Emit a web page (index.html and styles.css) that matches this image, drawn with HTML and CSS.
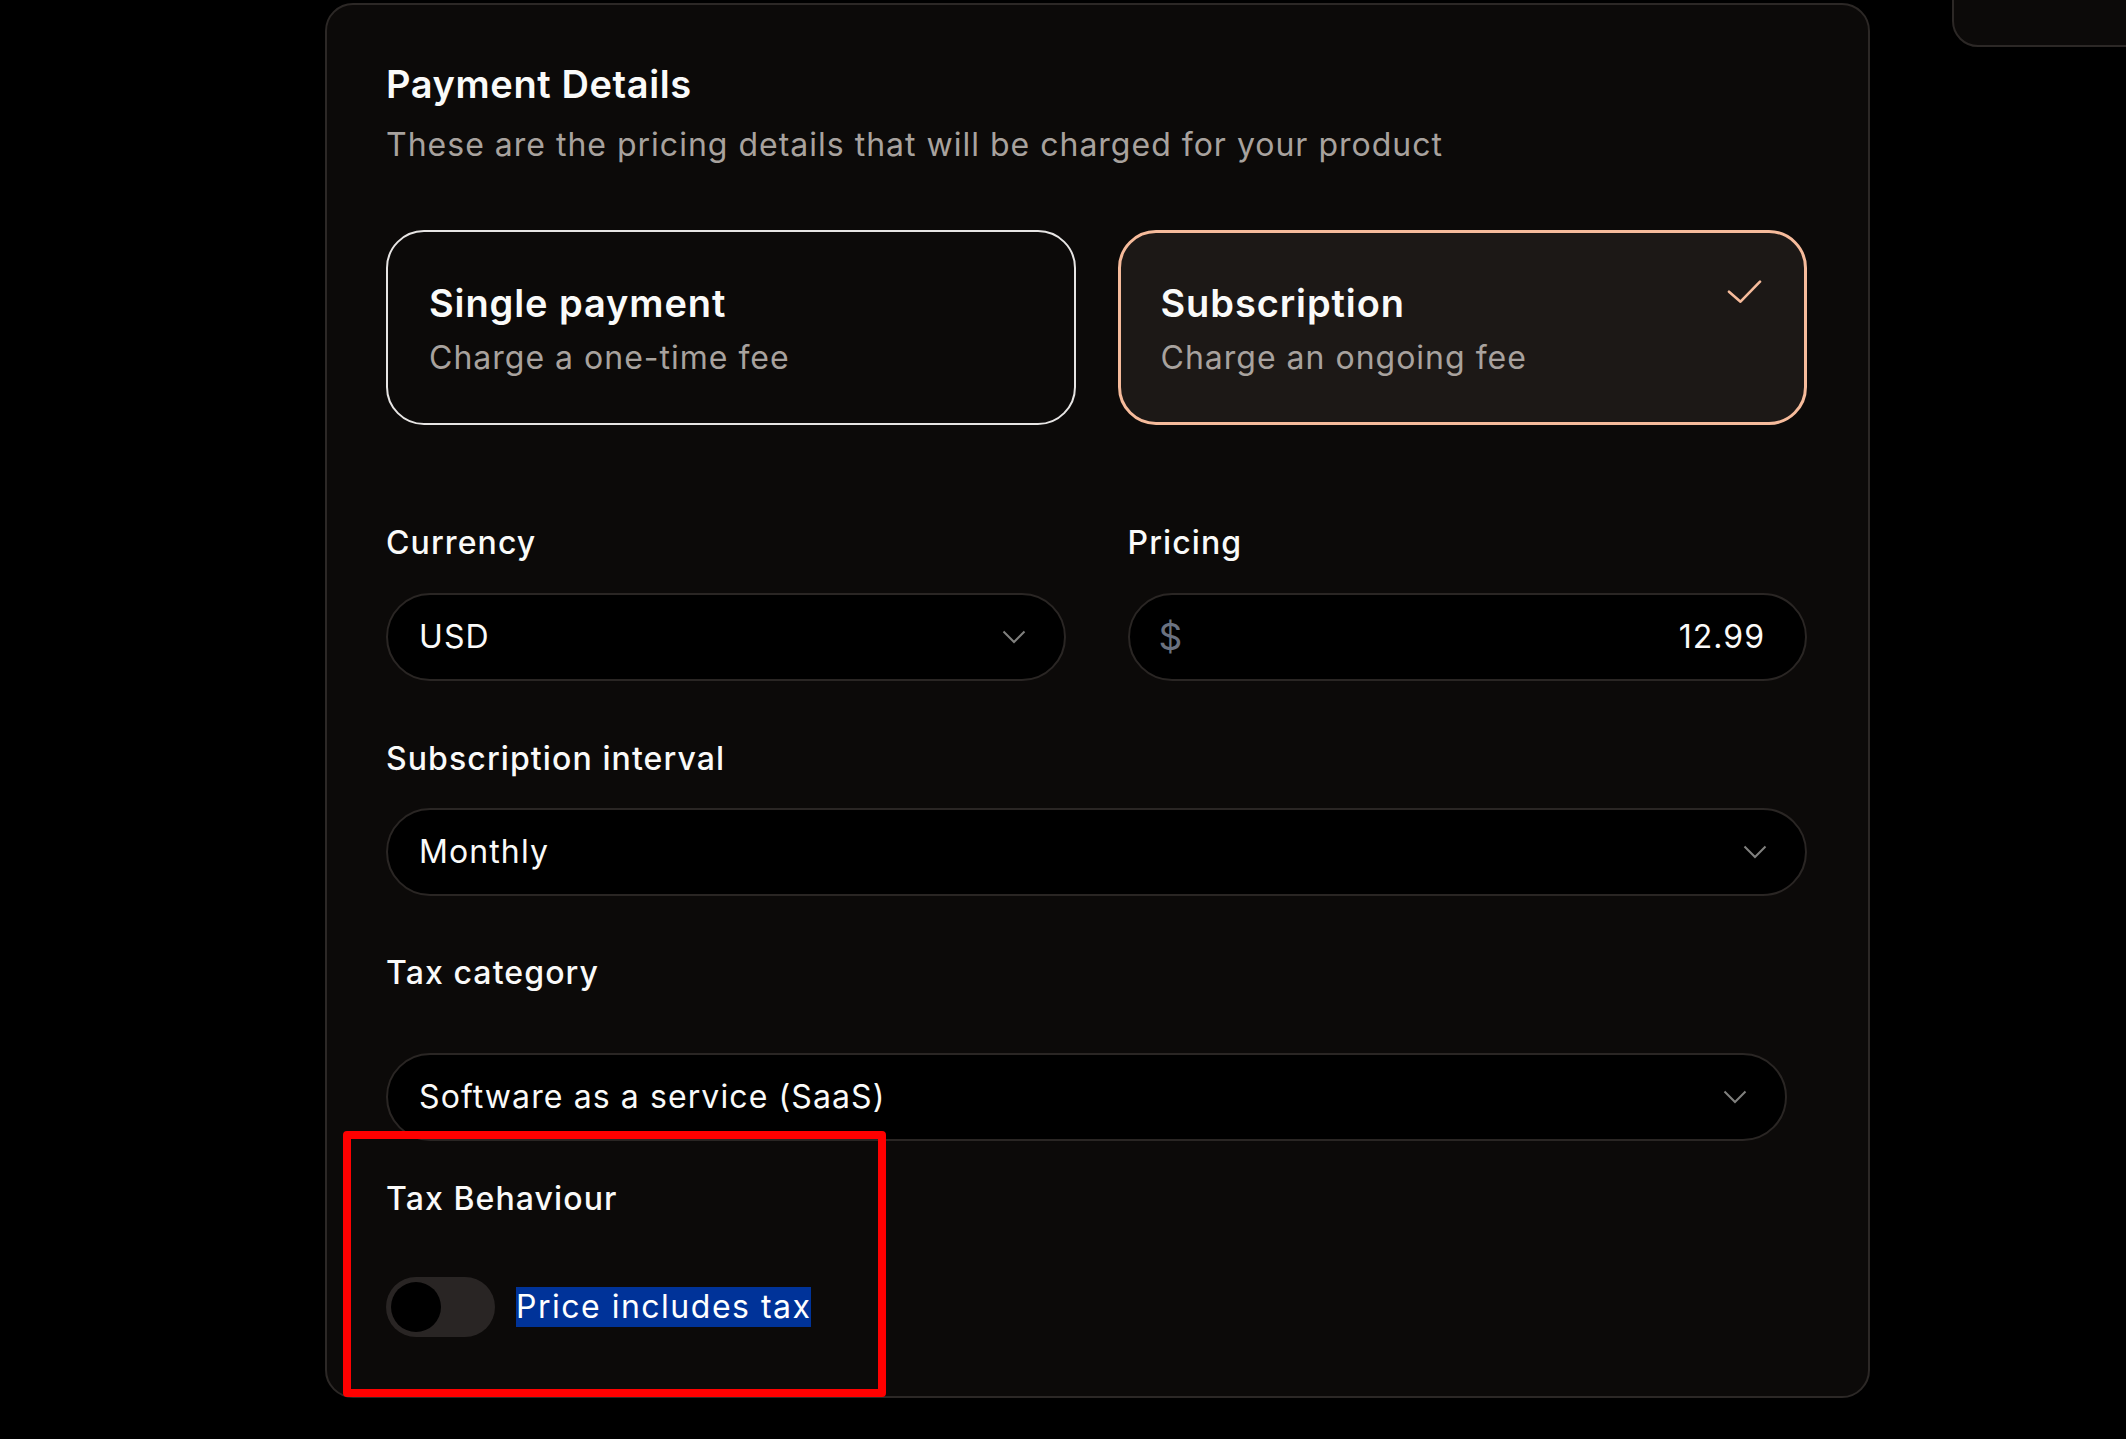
FILE: index.html
```html
<!DOCTYPE html>
<html lang="en">
<head>
<meta charset="utf-8">
<title>Payment Details</title>
<link rel="stylesheet" href="styles.css">
</head>
<body>
<div class="page">
  <section class="card">
    <h1 class="title">Payment Details</h1>
    <p class="subtitle">These are the pricing details that will be charged for your product</p>

    <div class="types">
      <div class="type">
        <div class="type-title">Single payment</div>
        <div class="type-desc">Charge a one-time fee</div>
      </div>
      <div class="type type-selected">
        <div class="type-title">Subscription</div>
        <div class="type-desc">Charge an ongoing fee</div>
        <svg class="check" width="35" height="24" viewBox="0 0 35 24"><polyline points="2,11.7 13.5,21.7 33,1.7" fill="none" stroke="#f6bb9b" stroke-width="2.6" stroke-linecap="round" stroke-linejoin="round"/></svg>
      </div>
    </div>

    <div class="row-2 first-fields">
      <div class="field">
        <div class="label">Currency</div>
        <div class="select">
          <span class="value">USD</span>
          <svg class="chev" width="24" height="14" viewBox="0 0 24 14"><polyline points="1.5,1.5 12,12 22.5,1.5" fill="none" stroke="#80807e" stroke-width="2"/></svg>
        </div>
      </div>
      <div class="field">
        <div class="label">Pricing</div>
        <div class="select price">
          <span class="dollar">$</span>
          <span class="value">12.99</span>
        </div>
      </div>
    </div>

    <div class="field interval">
      <div class="label">Subscription interval</div>
      <div class="select">
        <span class="value">Monthly</span>
        <svg class="chev" width="24" height="14" viewBox="0 0 24 14"><polyline points="1.5,1.5 12,12 22.5,1.5" fill="none" stroke="#80807e" stroke-width="2"/></svg>
      </div>
    </div>

    <div class="field taxcat">
      <div class="label">Tax category</div>
      <div class="select narrow">
        <span class="value">Software as a service (SaaS)</span>
        <svg class="chev" width="24" height="14" viewBox="0 0 24 14"><polyline points="1.5,1.5 12,12 22.5,1.5" fill="none" stroke="#80807e" stroke-width="2"/></svg>
      </div>
    </div>

    <div class="taxbeh">
      <div class="label">Tax Behaviour</div>
      <div class="toggle-row">
        <div class="toggle"><div class="knob"></div></div>
        <span class="toggle-text"><span class="hl">Price includes tax</span></span>
      </div>
      <div class="annot"></div>
    </div>
  </section>
  <div class="corner-piece"></div>
</div>
</body>
</html>
```

FILE: styles.css
```css
* { box-sizing: border-box; }
html, body {
  margin: 0;
  padding: 0;
  background: #000;
  overflow: hidden;
}
body {
  font-family: Inter, "Liberation Sans", sans-serif;
  color: #f5f5f4;
  width: 2126px;
  height: 1439px;
}
.page {
  display: flex;
  align-items: flex-start;
  padding-left: 325px;
  padding-top: 3px;
  width: 2126px;
  overflow: hidden;
}
.card {
  position: relative;
  flex: none;
  width: 1545px;
  background: #0c0a09;
  border: 2px solid #2c2826;
  border-radius: 28px;
  padding: 55px 61px 59px 59px;
}
.title {
  margin: 0;
  font-size: 38px;
  line-height: 48px;
  font-weight: 600;
  color: #fafaf9;
  letter-spacing: 0.6px;
}
.subtitle {
  margin: 17px 0 0;
  font-size: 32px;
  line-height: 40px;
  color: #a8a29e;
  letter-spacing: 1px;
}
.types {
  margin-top: 65px;
  display: grid;
  grid-template-columns: 1fr 1fr;
  gap: 42px;
}
.type {
  position: relative;
  height: 195px;
  border: 2px solid #e7e5e4;
  border-radius: 38px;
  padding: 47px 41px 45px;
  background: #0c0a09;
}
.type-selected {
  border: 3px solid #f6bb9b;
  background: #1c1816;
  padding: 46px 40px 44px;
}
.type-title {
  font-size: 38px;
  line-height: 48px;
  font-weight: 600;
  color: #fafaf9;
  letter-spacing: 0.9px;
}
.type-desc {
  margin-top: 11px;
  font-size: 32px;
  line-height: 40px;
  color: #a8a29e;
  letter-spacing: 1px;
}
.check {
  position: absolute;
  top: 47px;
  right: 42px;
}
.row-2 {
  display: grid;
  grid-template-columns: 1fr 1fr;
  gap: 62px;
}
.first-fields { margin-top: 98px; }
.label {
  font-size: 32px;
  line-height: 40px;
  font-weight: 500;
  color: #fafaf9;
  letter-spacing: 1.1px;
}
.select {
  margin-top: 30px;
  height: 88px;
  background: #000;
  border: 2px solid #2a2624;
  border-radius: 44px;
  display: flex;
  align-items: center;
  justify-content: space-between;
  padding: 0 38px 0 31px;
}
.value {
  font-size: 32px;
  line-height: 40px;
  color: #fafaf9;
  letter-spacing: 1.1px;
}
.price { padding: 0 40px 0 29px; }
.price .value { letter-spacing: 1px; }
.dollar {
  font-size: 37px;
  line-height: 40px;
  color: #6b7280;
}
.interval { margin-top: 58px; }
.interval .select { margin-top: 29px; }
.taxcat { margin-top: 57px; }
.taxcat .select { margin-top: 60px; }
.narrow { margin-right: 20px; }
.taxbeh {
  position: relative;
  margin-top: 38px;
}
.toggle-row {
  margin-top: 58px;
  display: flex;
  align-items: center;
  gap: 21px;
}
.toggle {
  width: 109px;
  height: 60px;
  border-radius: 30px;
  background: #292524;
  padding: 5px;
}
.knob {
  width: 50px;
  height: 50px;
  border-radius: 50%;
  background: #000;
}
.toggle-text {
  font-size: 32px;
  line-height: 40px;
  color: #fff;
  letter-spacing: 1.5px;
}
.hl {
  background: #003399;
  display: inline-block;
  line-height: 40px;
}
.annot {
  position: absolute;
  left: -43px;
  top: -48px;
  width: 543px;
  height: 266px;
  border: 8.5px solid #ff0000;
  border-radius: 4px;
  pointer-events: none;
}
.corner-piece {
  margin-left: 82px;
  margin-top: -40px;
  width: 260px;
  height: 84px;
  flex: none;
  background: #0c0a09;
  border: 2px solid #2c2826;
  border-radius: 0 0 0 26px;
}
```
